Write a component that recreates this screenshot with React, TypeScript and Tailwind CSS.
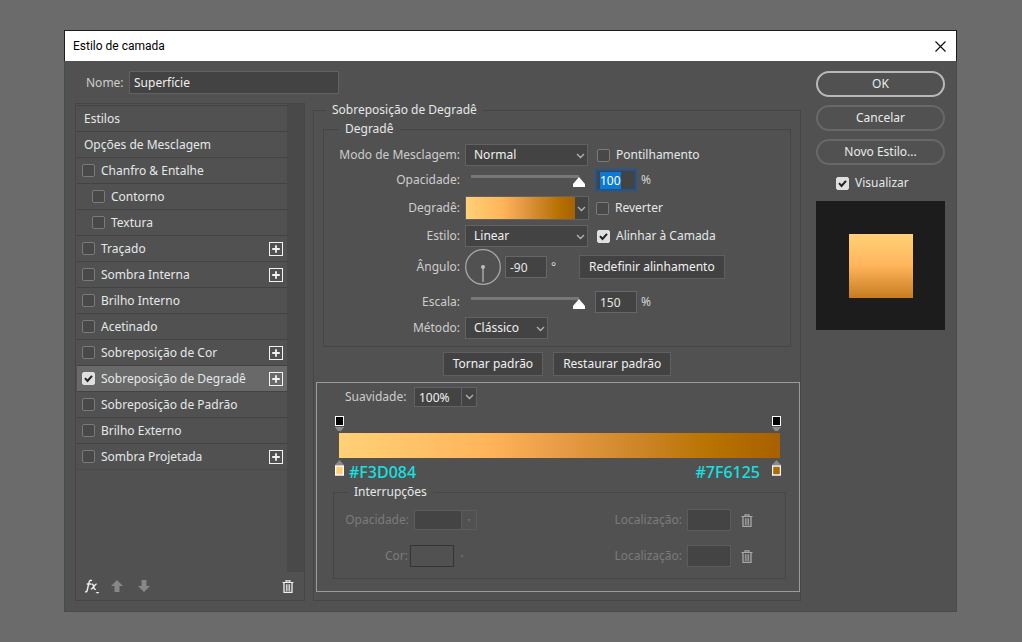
import { useEffect, useRef, type ReactNode } from "react";

type Effect = { name: string; plus?: boolean; indent?: boolean; on?: boolean };

const effects: Effect[] = [
  { name: "Chanfro & Entalhe" },
  { name: "Contorno", indent: true },
  { name: "Textura", indent: true },
  { name: "Traçado", plus: true },
  { name: "Sombra Interna", plus: true },
  { name: "Brilho Interno" },
  { name: "Acetinado" },
  { name: "Sobreposição de Cor", plus: true },
  { name: "Sobreposição de Degradê", plus: true, on: true },
  { name: "Sobreposição de Padrão" },
  { name: "Brilho Externo" },
  { name: "Sombra Projetada", plus: true },
];

const field =
  "h-[22px] border border-[#666666] bg-[#434343] px-1 text-[#e6e6e6] outline-none";

const goldGradient =
  "bg-[linear-gradient(to_right,#ffd177,#ffb45a_34%,#e89c46_50%,#cd8528_68%,#b87300_84%,#a86000)]";

function Check({ label, on }: { label: string; on?: boolean }) {
  return (
    <label className="flex items-center gap-1.5 text-[#e4e8e8]">
      <span className="grid size-[13px] shrink-0">
        <input
          type="checkbox"
          defaultChecked={on}
          className="peer col-start-1 row-start-1 size-[13px] appearance-none rounded-xs border border-[#7a7a7a] bg-[#484848] checked:border-[#e0e0e0] checked:bg-[#e0e0e0]"
        />
        <svg
          viewBox="0 0 13 13"
          className="pointer-events-none invisible col-start-1 row-start-1 size-[13px] peer-checked:visible"
        >
          <path d="M3 6.2 5.5 9 10 3.8" fill="none" stroke="#222" strokeWidth="2" />
        </svg>
      </span>
      {label}
    </label>
  );
}

function Chevron({ className = "" }: { className?: string }) {
  return (
    <svg viewBox="0 0 9 6" className={`h-1.5 w-[9px] ${className}`}>
      <path d="M1 1l3.5 3.5L8 1" fill="none" stroke="#b4b4b4" strokeWidth="1.3" />
    </svg>
  );
}

function Select({ id, options, className }: { id: string; options: string[]; className: string }) {
  return (
    <span className={`grid items-center ${className}`}>
      <select
        id={id}
        className="col-start-1 row-start-1 h-[22px] w-full appearance-none border border-[#626262] bg-[#434343] pl-2 text-[#f0f0f0] outline-none"
      >
        {options.map((o) => (
          <option key={o}>{o}</option>
        ))}
      </select>
      <Chevron className="pointer-events-none col-start-1 row-start-1 mt-0.5 mr-[3px] justify-self-end" />
    </span>
  );
}

function Slider({ label }: { label: string }) {
  return (
    <input
      type="range"
      aria-label={label}
      defaultValue={100}
      className="ml-1.5 h-4 w-[114px] appearance-none bg-[linear-gradient(#777777,#777777)] bg-[length:108px_3px] bg-[position:0_3px] bg-no-repeat outline-none [&::-webkit-slider-thumb]:mt-1 [&::-webkit-slider-thumb]:h-2.5 [&::-webkit-slider-thumb]:w-3 [&::-webkit-slider-thumb]:appearance-none [&::-webkit-slider-thumb]:bg-white [&::-webkit-slider-thumb]:[clip-path:polygon(50%_0,100%_70%,100%_100%,0_100%,0_70%)]"
    />
  );
}

function Row({
  label,
  htmlFor,
  height,
  control,
  children,
}: {
  label: string;
  htmlFor?: string;
  height: string;
  control: ReactNode;
  children?: ReactNode;
}) {
  return (
    <div className={`flex items-center ${height}`}>
      <label htmlFor={htmlFor} className="mr-1 w-[137px] shrink-0 pr-px text-right text-[#cdcdcd]">
        {label}
      </label>
      <div className="flex w-[130px] shrink-0 items-center">{control}</div>
      {children}
    </div>
  );
}

function Trash({ className = "" }: { className?: string }) {
  return (
    <svg viewBox="0 0 12 13" className={`h-[13px] w-3 ${className}`} fill="none" stroke="currentColor">
      <path d="M0.5 2.5h11M4 2V0.8h4V2" strokeWidth="1.2" />
      <path d="M2 3v9.3h8V3" strokeWidth="1.3" />
      <path d="M4.4 4.2v7M6 4.2v7M7.6 4.2v7" strokeWidth="0.9" />
    </svg>
  );
}

function PushButton({ children }: { children: ReactNode }) {
  return (
    <button className="h-6 border border-[#5f5f5f] bg-[#424242] px-[9px] whitespace-nowrap text-[#f0f0f0]">
      {children}
    </button>
  );
}

function EffectsList() {
  return (
    <section className="mt-[9px] flex w-[230px] shrink-0 flex-col border border-[#454545]">
      <div className="flex grow">
        <div className="min-w-0 grow pt-px pl-px text-[#e4e8e8]">
          <div className="flex h-[26px] items-center border-t border-[#434343] pl-[7px]">Estilos</div>
          <div className="flex h-[26px] items-center border-t border-[#434343] pl-[7px]">
            Opções de Mesclagem
          </div>
          <ul className="border-b border-[#4a4a4a]">
            {effects.map((e) => (
              <li
                key={e.name}
                className={`flex h-[26px] items-center justify-between border-t border-[#434343] pr-1 ${
                  e.indent ? "pl-[15px]" : "pl-[5px]"
                } ${e.on ? "bg-[#696969]" : ""}`}
              >
                <Check label={e.name} on={e.on} />
                {e.plus && (
                  <button aria-label={`Adicionar ${e.name}`}>
                    <svg viewBox="0 0 14 14" className="size-3.5" fill="none" stroke="#f2f2f2">
                      <rect x="0.5" y="0.5" width="13" height="13" />
                      <path d="M7 3.2v7.6M3.2 7h7.6" strokeWidth="1.8" />
                    </svg>
                  </button>
                )}
              </li>
            ))}
          </ul>
        </div>
        <div className="w-[17px] bg-[#494949]" />
      </div>
      <div className="flex h-7 items-center pr-2.5 pl-2">
        <button aria-label="Efeitos" className="text-[#eeeeee]">
          <svg viewBox="0 0 16 15" className="h-[15px] w-4" fill="none" stroke="currentColor">
            <path d="M8 1.6C6.3.8 5.3 1.8 5 3.4L3.3 11c-.3 1.5-1 2.2-2.3 1.7M2.7 5h4.3" strokeWidth="1.4" />
            <path d="M7.4 5.3c1.600-.6 1.900.8 2.300 2.600.4 1.800.8 2.900 2.100 2.300M12.600 5c-1.600 0-4.200 5.400-5.800 5.400" strokeWidth="1.4" />
            <path d="M11.5 13h4l-2 1.8z" fill="currentColor" stroke="none" />
          </svg>
        </button>
        <button aria-label="Mover para cima" className="ml-[11px] text-[#878787]">
          <svg viewBox="0 0 12 12" className="size-3" fill="currentColor">
            <path d="M6 0l6 6H8.500v6h-5V6H0z" />
          </svg>
        </button>
        <button aria-label="Mover para baixo" className="ml-[15px] text-[#878787]">
          <svg viewBox="0 0 12 12" className="size-3" fill="currentColor">
            <path d="M6 12l6-6H8.500V0h-5v6H0z" />
          </svg>
        </button>
        <button aria-label="Excluir" className="ml-auto text-[#eeeeee]">
          <Trash />
        </button>
      </div>
    </section>
  );
}

function GradientSettings() {
  const opacity = useRef<HTMLInputElement>(null);
  useEffect(() => {
    opacity.current?.focus();
    opacity.current?.select();
  }, []);

  return (
    <fieldset className="mx-[9px] mt-[3px] min-w-0 border border-[#454545] pb-[7px]">
      <legend className="ml-[15px] px-1.5 leading-4 text-[#e4e8e8]">Degradê</legend>
      <div className="pt-1">
        <Row
          label="Modo de Mesclagem:"
          htmlFor="blend"
          height="h-7"
          control={<Select id="blend" options={["Normal", "Multiplicação"]} className="w-[123px]" />}
        >
          <div className="pl-0.5"><Check label="Pontilhamento" /></div>
        </Row>
        <Row label="Opacidade:" htmlFor="opacity" height="h-[22px]" control={<Slider label="Opacidade" />}>
          <input
            id="opacity"
            ref={opacity}
            defaultValue="100"
            className="h-[22px] w-[42px] border-2 border-[#1d5693] bg-[#434343] px-[3px] text-white outline-none selection:bg-[#0a7ad6] selection:text-white"
          />
          <span className="ml-1 text-[#d4d4d4]">%</span>
        </Row>
        <Row
          label="Degradê:"
          height="h-[34px]"
          control={
            <button aria-label="Escolher degradê" className="flex h-6 w-[124px] border border-[#626262] bg-[#434343]">
              <span className={`h-full grow ${goldGradient}`} />
              <span className="flex h-full w-[13px] items-center justify-center pt-0.5"><Chevron /></span>
            </button>
          }
        >
          <div className="pl-px"><Check label="Reverter" /></div>
        </Row>
        <Row
          label="Estilo:"
          htmlFor="style"
          height="h-[22px]"
          control={<Select id="style" options={["Linear", "Radial"]} className="w-[123px]" />}
        >
          <div className="pl-0.5"><Check label="Alinhar à Camada" on /></div>
        </Row>
        <Row
          label="Ângulo:"
          htmlFor="angle"
          height="h-10"
          control={
            <>
              <svg viewBox="0 0 36 36" className="size-9 shrink-0">
                <circle cx="18" cy="18" r="17.3" fill="none" stroke="#a6a6a6" strokeWidth="1.3" />
                <path d="M18 18v15" stroke="#a6a6a6" strokeWidth="1.5" />
                <circle cx="18" cy="18" r="2" fill="#bdbdbd" />
              </svg>
              <input id="angle" defaultValue="-90" className={`${field} ml-1 w-[42px] shrink-0`} />
              <span className="ml-1 text-[#d4d4d4]">°</span>
            </>
          }
        >
          <div className="-ml-4"><PushButton>Redefinir alinhamento</PushButton></div>
        </Row>
        <Row label="Escala:" htmlFor="scale" height="h-[30px]" control={<Slider label="Escala" />}>
          <input id="scale" defaultValue="150" className={`${field} w-[42px]`} />
          <span className="ml-1 text-[#d4d4d4]">%</span>
        </Row>
        <Row
          label="Método:"
          htmlFor="method"
          height="h-[22px]"
          control={<Select id="method" options={["Clássico", "Linear"]} className="w-[83px]" />}
        />
      </div>
    </fieldset>
  );
}

function OpacityStop() {
  return (
    <svg viewBox="0 0 9 17" className="h-[17px] w-[9px]">
      <rect x="0.5" y="0.5" width="8" height="9" fill="#000" stroke="#fff" />
      <path d="M0 11h9l-3 4H3z" fill="#8a8a8a" />
    </svg>
  );
}

function ColorStop({ end }: { end?: boolean }) {
  return (
    <svg viewBox="0 0 9 16" className="h-4 w-[9px]">
      <path d="M4.5 0L9 5H0z" fill="#8a8a8a" />
      <rect x="0.5" y="6" width="8" height="9" fill={end ? "#b06a00" : "#ffd077"} stroke="#fff" strokeWidth="1.4" />
    </svg>
  );
}

function GradientEditor() {
  return (
    <section className="mt-1.5 ml-0.5 border border-[#9b9b9b] px-[15px] pt-1 pb-3">
      <div className="flex items-center pl-[13px]">
        <label htmlFor="smooth" className="w-[69px] text-[#cdcdcd]">Suavidade:</label>
        <input
          id="smooth"
          defaultValue="100%"
          className="h-5 w-12 border border-[#626262] bg-[#434343] px-1 text-[#f0f0f0] outline-none"
        />
        <button aria-label="Abrir suavidade" className="-ml-px flex h-5 w-4 items-center justify-center border border-[#626262] bg-[#434343]">
          <Chevron />
        </button>
      </div>
      <div className="mt-[9px] ml-[3px] flex justify-between pr-[3px]">
        <OpacityStop />
        <OpacityStop />
      </div>
      <div className={`mr-1 ml-[7px] h-[25px] ${goldGradient}`} />
      <div className="mt-0.5 ml-[3px] flex h-6 items-start pr-[3px] text-base leading-6 font-medium text-[#12e2e2]">
        <ColorStop />
        <span className="ml-[5px]">#F3D084</span>
        <span className="mr-3 ml-auto">#7F6125</span>
        <ColorStop end />
      </div>
      <fieldset className="mr-[-2px] ml-px min-w-0 border border-[#464646] text-[#7b7b7b]">
        <legend className="ml-3.5 px-1.5 leading-4 text-[#e4e8e8]">Interrupções</legend>
        <div className="flex h-10 items-center">
          <label htmlFor="stop-opacity" className="w-[75px] text-right">Opacidade:</label>
          <input id="stop-opacity" disabled className="ml-[5px] h-5 w-12 border border-[#5c5c5c] bg-[#444444]" />
          <button disabled aria-label="Opções de opacidade" className="-ml-px flex h-5 w-4 items-center justify-center border border-[#5c5c5c]">
            <svg viewBox="0 0 4 3" className="h-[3px] w-1"><path d="M0 0h4L2 3z" fill="#666" /></svg>
          </button>
          <label htmlFor="stop-loc" className="ml-auto">Localização:</label>
          <input id="stop-loc" disabled className="ml-[5px] h-[22px] w-11 border border-[#5c5c5c] bg-[#444444]" />
          <button disabled aria-label="Excluir opacidade" className="mr-8 ml-2.5 flex text-[#a8a8a8]"><Trash /></button>
        </div>
        <div className="flex h-8 items-center">
          <label htmlFor="stop-color" className="w-[74px] text-right">Cor:</label>
          <button id="stop-color" disabled aria-label="Cor" className="ml-0.5 h-[22px] w-11 border border-[#353535]" />
          <svg viewBox="0 0 4 3" className="ml-1.5 h-[3px] w-1"><path d="M0 0h4L2 3z" fill="#666" /></svg>
          <label htmlFor="color-loc" className="ml-auto">Localização:</label>
          <input id="color-loc" disabled className="ml-[5px] h-[22px] w-11 border border-[#5c5c5c] bg-[#444444]" />
          <button disabled aria-label="Excluir cor" className="mr-8 ml-2.5 flex text-[#a8a8a8]"><Trash /></button>
        </div>
        <div className="h-1.5" />
      </fieldset>
    </section>
  );
}

export default function App() {
  return (
    <main className="min-h-screen bg-[#6b6b6b] pt-[30px] pr-[65px] pb-[30px] pl-16 font-['Noto_Sans',sans-serif] text-xs">
      <div role="dialog" aria-label="Estilo de camada">
        <header className="flex h-[31px] items-center justify-between border border-b-0 border-[#1c1c1c] bg-white pr-2.5 pl-2 text-black">
          <h1 className="font-[Roboto,sans-serif]">Estilo de camada</h1>
          <button aria-label="Fechar">
            <svg viewBox="0 0 11 11" className="size-[11px]">
              <path d="M0.5 0.5l10 10M10.5 0.5l-10 10" stroke="#111" strokeWidth="1.2" />
            </svg>
          </button>
        </header>
        <div className="flex border border-t-0 border-[#434d4f] bg-[#515151] pt-2.5 pr-[11px] pb-2.5 pl-2.5">
          <div className="min-w-0 grow">
            <div className="flex items-center pl-[11px]">
              <label htmlFor="name" className="w-[43px] text-[#cdcdcd]">Nome:</label>
              <input
                id="name"
                defaultValue="Superfície"
                className="h-[23px] w-[210px] border border-[#626262] bg-[#434343] px-1 text-[#f0f0f0] outline-none"
              />
            </div>
            <div className="flex gap-2">
              <EffectsList />
              <fieldset className="mt-2 min-w-0 grow border border-[#454545] pb-2">
                <legend className="ml-3 px-1.5 leading-4 text-[#e4e8e8]">Sobreposição de Degradê</legend>
                <GradientSettings />
                <div className="mt-[5px] flex justify-center gap-2.5">
                  <PushButton>Tornar padrão</PushButton>
                  <PushButton>Restaurar padrão</PushButton>
                </div>
                <GradientEditor />
              </fieldset>
            </div>
          </div>
          <aside className="ml-[15px] flex w-[129px] shrink-0 flex-col text-[#e8ecec]">
            <button className="h-[26px] rounded-full border-2 border-[#b9b9b9]">OK</button>
            <button className="mt-2 h-[26px] rounded-full border-2 border-[#686868]">Cancelar</button>
            <button className="mt-2 h-[26px] rounded-full border-2 border-[#686868]">Novo Estilo...</button>
            <div className="mt-2 flex h-5 items-center pl-5"><Check label="Visualizar" on /></div>
            <div className="mt-2 flex h-[129px] items-center justify-center bg-[#1c1c1c]">
              <div className="size-16 bg-linear-to-b from-[#ffd177] via-[#ffb45a] to-[#c67c1c]" />
            </div>
          </aside>
        </div>
      </div>
    </main>
  );
}
